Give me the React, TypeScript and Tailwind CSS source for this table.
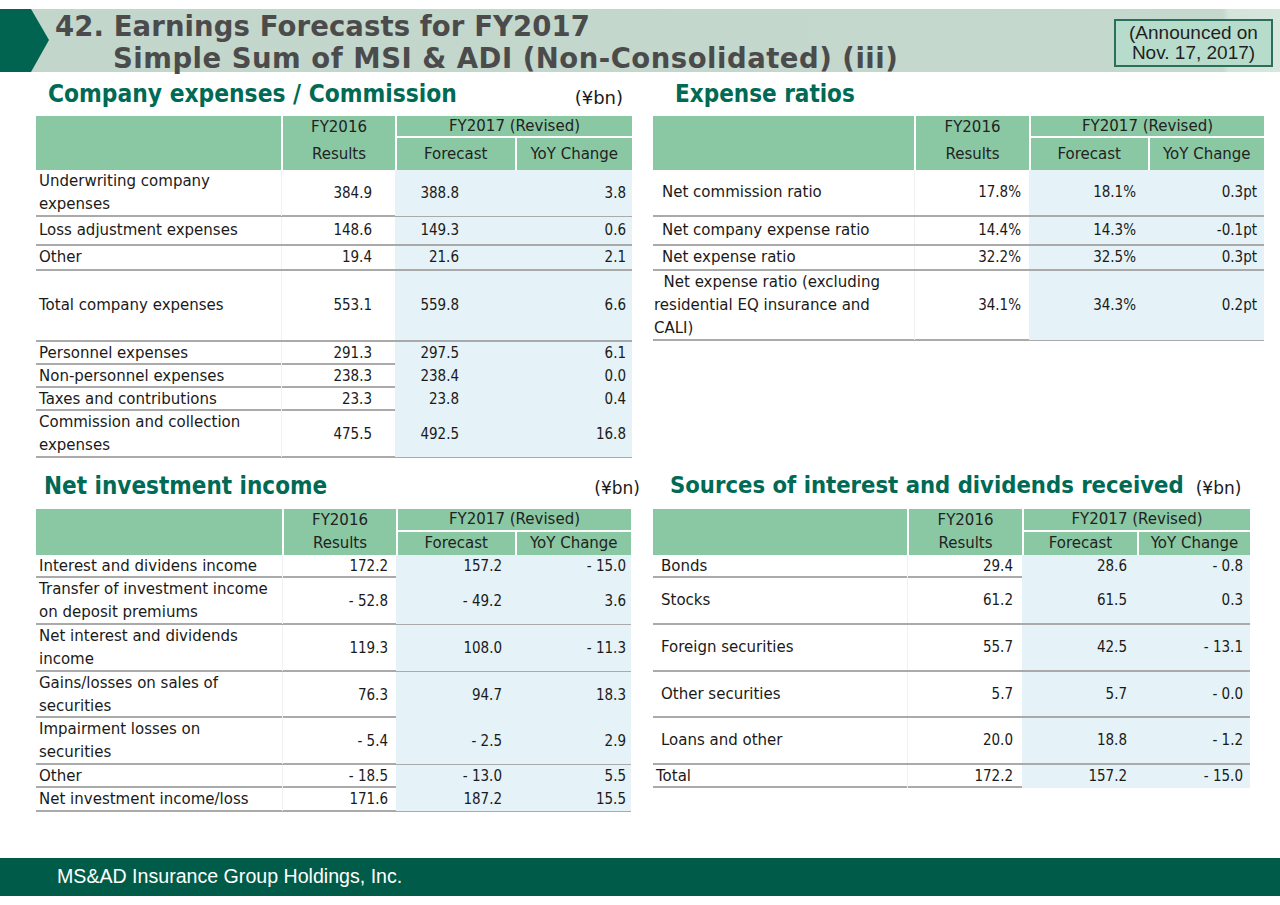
import React from "react";

type Row = { label: string[]; values: [string, string, string]; h: string; lpad?: string };

const T = "font-['DejaVu_Sans_Condensed','DejaVu_Sans',sans-serif]";
const W = "font-['DejaVu_Sans',sans-serif]";

function Header({ cols, h1, h2 }: { cols: string; h1: string; h2: string }) {
  return (
    <div className={`grid ${cols} bg-[#8ac8a3] text-[15px] text-[#222] ${W}`}>
      <div />
      <div className="border-l-2 border-white flex flex-col">
        <div className={`${h1} flex items-center justify-center`}>FY2016</div>
        <div className={`${h2} flex items-center justify-center`}>Results</div>
      </div>
      <div className="col-span-2 border-l-2 border-white flex flex-col">
        <div className={`${h1} flex items-center justify-center border-b-2 border-white`}>FY2017 (Revised)</div>
        <div className={`${h2} flex`}>
          <div className="flex-1 flex items-center justify-center">Forecast</div>
          <div className="w-[50%] flex items-center justify-center border-l-2 border-white">YoY Change</div>
        </div>
      </div>
    </div>
  );
}

function Body({ cols, rows, pads }: { cols: string; rows: Row[]; pads: [string, string, string] }) {
  return (
    <div className="flex flex-col text-[15px] text-[#1a1a1a]">
      {rows.map((r, i) => (
        <div key={i} className={`grid ${cols} ${r.h} border-b-2 border-[#aaaaaa]`}>
          <div className={`flex flex-col justify-center leading-[23px] ${W} ${r.lpad ?? "pl-[3px]"}`}>
            {r.label.map((l, j) => (
              <span key={j} className="whitespace-pre">{l}</span>
            ))}
          </div>
          <div className={`flex items-center justify-end border-l border-[#eef2f2] ${pads[0]}`}>{r.values[0]}</div>
          <div className={`flex items-center justify-end bg-[#e5f2f7] ${pads[1]}`}>{r.values[1]}</div>
          <div className={`flex items-center justify-end bg-[#e5f2f7] ${pads[2]}`}>{r.values[2]}</div>
        </div>
      ))}
    </div>
  );
}

const t1: Row[] = [
  { label: ["Underwriting company", "expenses"], values: ["384.9", "388.8", "3.8"], h: "h-[47px]" },
  { label: ["Loss adjustment expenses"], values: ["148.6", "149.3", "0.6"], h: "h-[29px]" },
  { label: ["Other"], values: ["19.4", "21.6", "2.1"], h: "h-[25px]" },
  { label: ["Total company expenses"], values: ["553.1", "559.8", "6.6"], h: "h-[71px]" },
  { label: ["Personnel expenses"], values: ["291.3", "297.5", "6.1"], h: "h-[23px]" },
  { label: ["Non-personnel expenses"], values: ["238.3", "238.4", "0.0"], h: "h-[23px]" },
  { label: ["Taxes and contributions"], values: ["23.3", "23.8", "0.4"], h: "h-[23px]" },
  { label: ["Commission and collection", "expenses"], values: ["475.5", "492.5", "16.8"], h: "h-[47px]" },
];

const t2: Row[] = [
  { label: ["Net commission ratio"], values: ["17.8%", "18.1%", "0.3pt"], h: "h-[47px]", lpad: "pl-[9px]" },
  { label: ["Net company expense ratio"], values: ["14.4%", "14.3%", "-0.1pt"], h: "h-[29px]", lpad: "pl-[9px]" },
  { label: ["Net expense ratio"], values: ["32.2%", "32.5%", "0.3pt"], h: "h-[25px]", lpad: "pl-[9px]" },
  { label: ["  Net expense ratio (excluding", "residential EQ insurance and", "CALI)"], values: ["34.1%", "34.3%", "0.2pt"], h: "h-[70px]", lpad: "pl-[1px]" },
];

const t3: Row[] = [
  { label: ["Interest and dividens income"], values: ["172.2", "157.2", "- 15.0"], h: "h-[23px]" },
  { label: ["Transfer of investment income", "on deposit premiums"], values: ["- 52.8", "- 49.2", "3.6"], h: "h-[47px]" },
  { label: ["Net interest and dividends", "income"], values: ["119.3", "108.0", "- 11.3"], h: "h-[47px]" },
  { label: ["Gains/losses on sales of", "securities"], values: ["76.3", "94.7", "18.3"], h: "h-[46px]" },
  { label: ["Impairment losses on", "securities"], values: ["- 5.4", "- 2.5", "2.9"], h: "h-[47px]" },
  { label: ["Other"], values: ["- 18.5", "- 13.0", "5.5"], h: "h-[23px]" },
  { label: ["Net investment income/loss"], values: ["171.6", "187.2", "15.5"], h: "h-[24px]" },
];

const t4: Row[] = [
  { label: ["Bonds"], values: ["29.4", "28.6", "- 0.8"], h: "h-[23px]", lpad: "pl-[8px]" },
  { label: ["Stocks"], values: ["61.2", "61.5", "0.3"], h: "h-[47px]", lpad: "pl-[8px]" },
  { label: ["Foreign securities"], values: ["55.7", "42.5", "- 13.1"], h: "h-[47px]", lpad: "pl-[8px]" },
  { label: ["Other securities"], values: ["5.7", "5.7", "- 0.0"], h: "h-[46px]", lpad: "pl-[8px]" },
  { label: ["Loans and other"], values: ["20.0", "18.8", "- 1.2"], h: "h-[47px]", lpad: "pl-[8px]" },
  { label: ["Total"], values: ["172.2", "157.2", "- 15.0"], h: "h-[23px]", lpad: "pl-[3px]" },
];

export default function App() {
  return (
    <div className={`w-[1280px] h-[905px] bg-white flex flex-col overflow-hidden ${T}`}>
      {/* Title band */}
      <div className="mt-[9px] h-[63px] flex bg-[linear-gradient(to_right,#c2d6cb_0%,#c4d8cd_95.5%,#d4e4da_96%,#d8e7de_100%)]">
        <svg width="49" height="63" viewBox="0 0 49 63" className="shrink-0">
          <polygon points="0,0 31,0 49,31 31,63 0,63" fill="#006451" />
        </svg>
        <div className={`ml-[6px] flex flex-col font-bold text-[27.5px] text-[#4b4b4b] leading-[32px] pt-[1px] whitespace-nowrap ${W}`}>
          <span className="tracking-[0.1px]">42. Earnings Forecasts for FY2017</span>
          <span className="pl-[58px] tracking-[0.5px]">Simple Sum of MSI &amp; ADI (Non-Consolidated) (iii)</span>
        </div>
        <div className="ml-auto mr-[7px] mt-[10px] w-[159px] h-[48px] border-2 border-[#2b6e5e] bg-[#b8dccb] flex flex-col items-center justify-center font-['Liberation_Sans',Arial,sans-serif] text-[19px] leading-[20px] text-[#1f1f1f]">
          <span>(Announced on</span>
          <span>Nov. 17, 2017)</span>
        </div>
      </div>

      {/* Top section */}
      <div className="flex pl-[36px] gap-[21px]">
        <div className="w-[596px] flex flex-col">
          <div className="h-[44px] flex items-center whitespace-nowrap">
            <span className="pl-[12px] font-bold text-[24.3px] text-[#006a55]">Company expenses / Commission</span>
            <span className={`ml-auto mr-[9px] mt-[6px] text-[18px] text-[#1a1a1a] ${W}`}>(¥bn)</span>
          </div>
          <Header cols="grid-cols-[245px_114px_113px_124px]" h1="h-[22px]" h2="h-[32px]" />
          <Body cols="grid-cols-[245px_114px_113px_124px]" rows={t1} pads={["pr-[23px]", "pr-[49px]", "pr-[6px]"]} />
        </div>
        <div className="w-[611px] flex flex-col">
          <div className="h-[44px] flex items-center whitespace-nowrap">
            <span className="pl-[22px] font-bold text-[24px] text-[#006a55]">Expense ratios</span>
          </div>
          <Header cols="grid-cols-[261px_115px_114px_121px]" h1="h-[22px]" h2="h-[32px]" />
          <Body cols="grid-cols-[261px_115px_114px_121px]" rows={t2} pads={["pr-[8px]", "pr-[7px]", "pr-[7px]"]} />
        </div>
      </div>

      {/* Bottom section */}
      <div className="flex pl-[36px] gap-[22px]">
        <div className="w-[595px] flex flex-col">
          <div className="h-[51px] pt-[4px] flex items-center whitespace-nowrap">
            <span className="pl-[8px] font-bold text-[24px] text-[#006a55]">Net investment income</span>
            <span className={`ml-auto mr-[-9px] mt-[6px] text-[17px] text-[#1a1a1a] ${W}`}>(¥bn)</span>
          </div>
          <Header cols="grid-cols-[246px_114px_113px_122px]" h1="h-[23px]" h2="h-[23px]" />
          <Body cols="grid-cols-[246px_114px_113px_122px]" rows={t3} pads={["pr-[8px]", "pr-[7px]", "pr-[5px]"]} />
        </div>
        <div className="w-[597px] flex flex-col">
          <div className="h-[51px] pt-[4px] flex items-center whitespace-nowrap">
            <span className="shrink-0 pl-[17px] font-bold text-[23.6px] text-[#006a55]">Sources of interest and dividends received</span>
            <span className={`shrink-0 ml-[12px] mt-[6px] text-[17px] text-[#1a1a1a] ${W}`}>(¥bn)</span>
          </div>
          <Header cols="grid-cols-[254px_115px_114px_114px]" h1="h-[23px]" h2="h-[23px]" />
          <Body cols="grid-cols-[254px_115px_114px_114px]" rows={t4} pads={["pr-[9px]", "pr-[9px]", "pr-[7px]"]} />
        </div>
      </div>

      {/* Footer */}
      <div className="mt-auto mb-[9px] h-[38px] bg-[#005c48] flex items-center pl-[57px]">
        <span className="font-['Liberation_Sans',Arial,sans-serif] text-[19.6px] text-white">MS&amp;AD Insurance Group Holdings, Inc.</span>
      </div>
    </div>
  );
}
